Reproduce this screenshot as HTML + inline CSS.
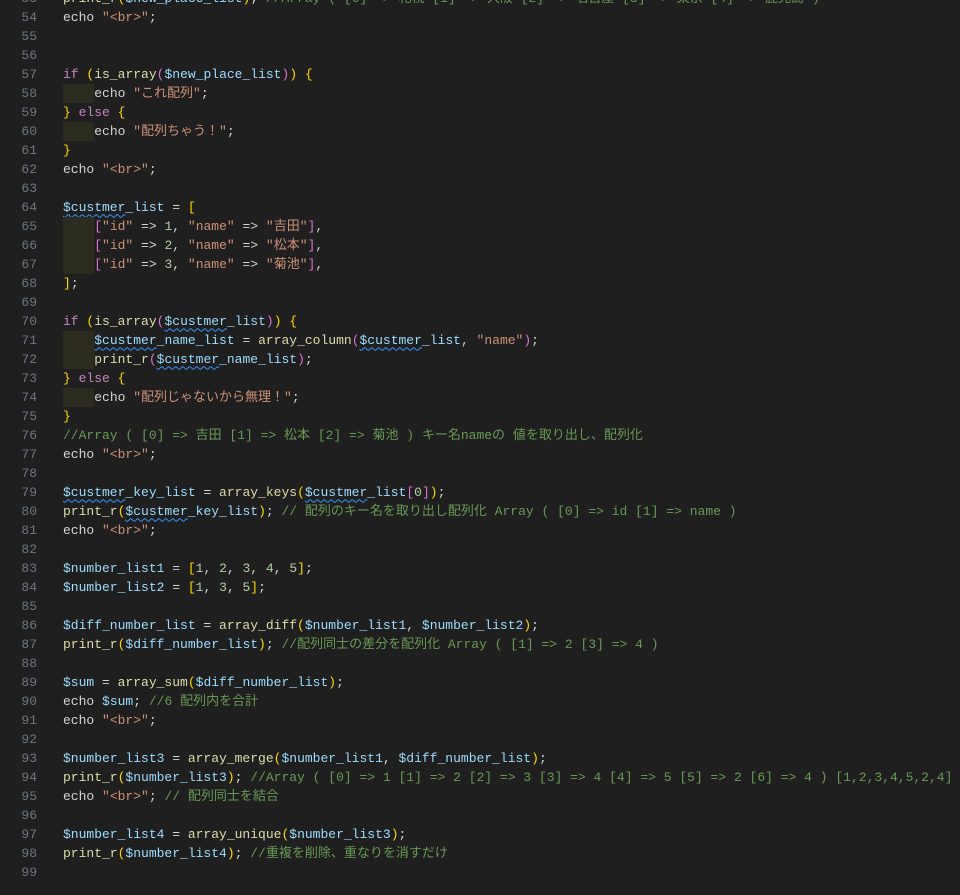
<!DOCTYPE html>
<html><head><meta charset="utf-8"><style>
body{margin:0;background:#1f1f1f;width:960px;height:895px;overflow:hidden;font-family:"Liberation Mono","Noto Sans CJK JP",monospace;font-size:13px;color:#d4d4d4}
.wrap{position:absolute;top:-11.5px;left:0;width:960px}
.l{height:19px;line-height:19px;position:relative;white-space:pre}
.n{position:absolute;left:0;width:37px;text-align:right;color:#6e7681}
.t{position:absolute;left:63px}
.ind{position:absolute;left:63px;top:0;width:31px;height:19px;background:#2c2b20}
.k{color:#c586c0}.e{color:#d4d4d4}.v{color:#9cdcfe}.f{color:#dcdcaa}.s{color:#ce9178}.nm{color:#b5cea8}.c{color:#6a9955}
.b1{color:#ffd700}.b2{color:#da70d6}.b3{color:#179fff}
.w{text-decoration:underline wavy #3794ff;text-decoration-thickness:1px;text-underline-offset:3px}
</style></head><body><div class="wrap">
<div class="l"><span class="n">53</span><span class="t"><span class="f">print_r</span><span class="b1">(</span><span class="v">$new_place_list</span><span class="b1">)</span>; <span class="c">//Array ( [0] => 札幌 [1] => 大阪 [2] => 名古屋 [3] => 東京 [4] => 鹿児島 )</span></span></div>
<div class="l"><span class="n">54</span><span class="t"><span class="e">echo</span> <span class="s">"&lt;br&gt;"</span>;</span></div>
<div class="l"><span class="n">55</span></div>
<div class="l"><span class="n">56</span></div>
<div class="l"><span class="n">57</span><span class="t"><span class="k">if</span> <span class="b1">(</span><span class="f">is_array</span><span class="b2">(</span><span class="v">$new_place_list</span><span class="b2">)</span><span class="b1">)</span> <span class="b1">{</span></span></div>
<div class="l"><span class="n">58</span><span class="ind"></span><span class="t">    <span class="e">echo</span> <span class="s">"これ配列"</span>;</span></div>
<div class="l"><span class="n">59</span><span class="t"><span class="b1">}</span> <span class="k">else</span> <span class="b1">{</span></span></div>
<div class="l"><span class="n">60</span><span class="ind"></span><span class="t">    <span class="e">echo</span> <span class="s">"配列ちゃう！"</span>;</span></div>
<div class="l"><span class="n">61</span><span class="t"><span class="b1">}</span></span></div>
<div class="l"><span class="n">62</span><span class="t"><span class="e">echo</span> <span class="s">"&lt;br&gt;"</span>;</span></div>
<div class="l"><span class="n">63</span></div>
<div class="l"><span class="n">64</span><span class="t"><span class="v"><span class="w">$custmer</span>_list</span> = <span class="b1">[</span></span></div>
<div class="l"><span class="n">65</span><span class="ind"></span><span class="t">    <span class="b2">[</span><span class="s">"id"</span> =&gt; <span class="nm">1</span>, <span class="s">"name"</span> =&gt; <span class="s">"吉田"</span><span class="b2">]</span>,</span></div>
<div class="l"><span class="n">66</span><span class="ind"></span><span class="t">    <span class="b2">[</span><span class="s">"id"</span> =&gt; <span class="nm">2</span>, <span class="s">"name"</span> =&gt; <span class="s">"松本"</span><span class="b2">]</span>,</span></div>
<div class="l"><span class="n">67</span><span class="ind"></span><span class="t">    <span class="b2">[</span><span class="s">"id"</span> =&gt; <span class="nm">3</span>, <span class="s">"name"</span> =&gt; <span class="s">"菊池"</span><span class="b2">]</span>,</span></div>
<div class="l"><span class="n">68</span><span class="t"><span class="b1">]</span>;</span></div>
<div class="l"><span class="n">69</span></div>
<div class="l"><span class="n">70</span><span class="t"><span class="k">if</span> <span class="b1">(</span><span class="f">is_array</span><span class="b2">(</span><span class="v"><span class="w">$custmer</span>_list</span><span class="b2">)</span><span class="b1">)</span> <span class="b1">{</span></span></div>
<div class="l"><span class="n">71</span><span class="ind"></span><span class="t">    <span class="v"><span class="w">$custmer</span>_name_list</span> = <span class="f">array_column</span><span class="b2">(</span><span class="v"><span class="w">$custmer</span>_list</span>, <span class="s">"name"</span><span class="b2">)</span>;</span></div>
<div class="l"><span class="n">72</span><span class="ind"></span><span class="t">    <span class="f">print_r</span><span class="b2">(</span><span class="v"><span class="w">$custmer</span>_name_list</span><span class="b2">)</span>;</span></div>
<div class="l"><span class="n">73</span><span class="t"><span class="b1">}</span> <span class="k">else</span> <span class="b1">{</span></span></div>
<div class="l"><span class="n">74</span><span class="ind"></span><span class="t">    <span class="e">echo</span> <span class="s">"配列じゃないから無理！"</span>;</span></div>
<div class="l"><span class="n">75</span><span class="t"><span class="b1">}</span></span></div>
<div class="l"><span class="n">76</span><span class="t"><span class="c">//Array ( [0] => 吉田 [1] => 松本 [2] => 菊池 ) キー名nameの 値を取り出し、配列化</span></span></div>
<div class="l"><span class="n">77</span><span class="t"><span class="e">echo</span> <span class="s">"&lt;br&gt;"</span>;</span></div>
<div class="l"><span class="n">78</span></div>
<div class="l"><span class="n">79</span><span class="t"><span class="v"><span class="w">$custmer</span>_key_list</span> = <span class="f">array_keys</span><span class="b1">(</span><span class="v"><span class="w">$custmer</span>_list</span><span class="b2">[</span><span class="nm">0</span><span class="b2">]</span><span class="b1">)</span>;</span></div>
<div class="l"><span class="n">80</span><span class="t"><span class="f">print_r</span><span class="b1">(</span><span class="v"><span class="w">$custmer</span>_key_list</span><span class="b1">)</span>; <span class="c">// 配列のキー名を取り出し配列化 Array ( [0] => id [1] => name )</span></span></div>
<div class="l"><span class="n">81</span><span class="t"><span class="e">echo</span> <span class="s">"&lt;br&gt;"</span>;</span></div>
<div class="l"><span class="n">82</span></div>
<div class="l"><span class="n">83</span><span class="t"><span class="v">$number_list1</span> = <span class="b1">[</span><span class="nm">1</span>, <span class="nm">2</span>, <span class="nm">3</span>, <span class="nm">4</span>, <span class="nm">5</span><span class="b1">]</span>;</span></div>
<div class="l"><span class="n">84</span><span class="t"><span class="v">$number_list2</span> = <span class="b1">[</span><span class="nm">1</span>, <span class="nm">3</span>, <span class="nm">5</span><span class="b1">]</span>;</span></div>
<div class="l"><span class="n">85</span></div>
<div class="l"><span class="n">86</span><span class="t"><span class="v">$diff_number_list</span> = <span class="f">array_diff</span><span class="b1">(</span><span class="v">$number_list1</span>, <span class="v">$number_list2</span><span class="b1">)</span>;</span></div>
<div class="l"><span class="n">87</span><span class="t"><span class="f">print_r</span><span class="b1">(</span><span class="v">$diff_number_list</span><span class="b1">)</span>; <span class="c">//配列同士の差分を配列化 Array ( [1] => 2 [3] => 4 )</span></span></div>
<div class="l"><span class="n">88</span></div>
<div class="l"><span class="n">89</span><span class="t"><span class="v">$sum</span> = <span class="f">array_sum</span><span class="b1">(</span><span class="v">$diff_number_list</span><span class="b1">)</span>;</span></div>
<div class="l"><span class="n">90</span><span class="t"><span class="e">echo</span> <span class="v">$sum</span>; <span class="c">//6 配列内を合計</span></span></div>
<div class="l"><span class="n">91</span><span class="t"><span class="e">echo</span> <span class="s">"&lt;br&gt;"</span>;</span></div>
<div class="l"><span class="n">92</span></div>
<div class="l"><span class="n">93</span><span class="t"><span class="v">$number_list3</span> = <span class="f">array_merge</span><span class="b1">(</span><span class="v">$number_list1</span>, <span class="v">$diff_number_list</span><span class="b1">)</span>;</span></div>
<div class="l"><span class="n">94</span><span class="t"><span class="f">print_r</span><span class="b1">(</span><span class="v">$number_list3</span><span class="b1">)</span>; <span class="c">//Array ( [0] => 1 [1] => 2 [2] => 3 [3] => 4 [4] => 5 [5] => 2 [6] => 4 ) [1,2,3,4,5,2,4]</span></span></div>
<div class="l"><span class="n">95</span><span class="t"><span class="e">echo</span> <span class="s">"&lt;br&gt;"</span>; <span class="c">// 配列同士を結合</span></span></div>
<div class="l"><span class="n">96</span></div>
<div class="l"><span class="n">97</span><span class="t"><span class="v">$number_list4</span> = <span class="f">array_unique</span><span class="b1">(</span><span class="v">$number_list3</span><span class="b1">)</span>;</span></div>
<div class="l"><span class="n">98</span><span class="t"><span class="f">print_r</span><span class="b1">(</span><span class="v">$number_list4</span><span class="b1">)</span>; <span class="c">//重複を削除、重なりを消すだけ</span></span></div>
<div class="l"><span class="n">99</span></div>
</div></body></html>
